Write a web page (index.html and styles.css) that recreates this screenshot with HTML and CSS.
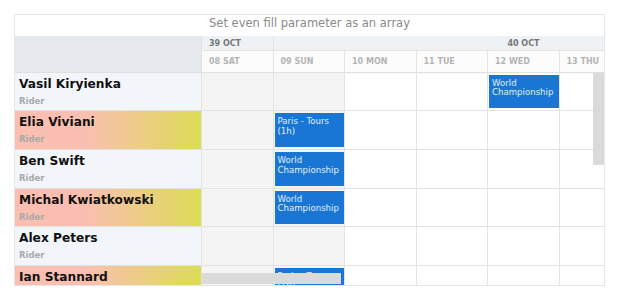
FILE: index.html
```html
<!DOCTYPE html>
<html>
<head>
  <meta charset="utf-8">
  <title>Scheduler - even fill</title>
  <link rel="stylesheet" href="styles.css">
</head>
<body>
<div class="scheduler">
  <div class="title">Set even fill parameter as an array</div>
  <div class="main">
    <div class="res-pane">
      <div class="res-header"></div>
      <div class="res odd"><div class="name">Vasil Kiryienka</div><div class="role">Rider</div></div>
      <div class="res even"><div class="name">Elia Viviani</div><div class="role">Rider</div></div>
      <div class="res odd"><div class="name">Ben Swift</div><div class="role">Rider</div></div>
      <div class="res even"><div class="name">Michal Kwiatkowski</div><div class="role">Rider</div></div>
      <div class="res odd"><div class="name">Alex Peters</div><div class="role">Rider</div></div>
      <div class="res even"><div class="name">Ian Stannard</div><div class="role">Rider</div></div>
    </div>

    <div class="time-pane">
      <div class="time-header">
        <div class="weeks">
          <div class="week w39">39 OCT</div>
          <div class="week w40">40 OCT</div>
        </div>
        <div class="days">
          <div class="day">08 SAT</div>
          <div class="day">09 SUN</div>
          <div class="day">10 MON</div>
          <div class="day">11 TUE</div>
          <div class="day">12 WED</div>
          <div class="day">13 THU</div>
          <div class="day">14 FRI</div>
          <div class="day">15 SAT</div>
        </div>
      </div>

      <div class="time-body">
        <div class="trow">
          <div class="cell we"></div><div class="cell we"></div><div class="cell"></div><div class="cell"></div>
          <div class="cell"><div class="event">World Championship</div></div>
          <div class="cell"></div><div class="cell"></div><div class="cell we"></div>
        </div>
        <div class="trow">
          <div class="cell we"></div>
          <div class="cell we"><div class="event">Paris - Tours (1h)</div></div>
          <div class="cell"></div><div class="cell"></div><div class="cell"></div><div class="cell"></div><div class="cell"></div><div class="cell we"></div>
        </div>
        <div class="trow">
          <div class="cell we"></div>
          <div class="cell we"><div class="event">World Championship</div></div>
          <div class="cell"></div><div class="cell"></div><div class="cell"></div><div class="cell"></div><div class="cell"></div><div class="cell we"></div>
        </div>
        <div class="trow">
          <div class="cell we"></div>
          <div class="cell we"><div class="event">World Championship</div></div>
          <div class="cell"></div><div class="cell"></div><div class="cell"></div><div class="cell"></div><div class="cell"></div><div class="cell we"></div>
        </div>
        <div class="trow">
          <div class="cell we"></div><div class="cell we"></div>
          <div class="cell"></div><div class="cell"></div><div class="cell"></div><div class="cell"></div><div class="cell"></div><div class="cell we"></div>
        </div>
        <div class="trow">
          <div class="cell we"></div>
          <div class="cell we"><div class="event">Paris - Tours (1h)</div></div>
          <div class="cell"></div><div class="cell"></div><div class="cell"></div><div class="cell"></div><div class="cell"></div><div class="cell we"></div>
        </div>
      </div>

      <!-- overlay scrollbars -->
      <div class="vscroll"></div>
      <div class="hscroll"></div>
    </div>
  </div>
</div>
</body>
</html>
```

FILE: styles.css
```css
html, body {
  margin: 0;
  padding: 0;
  background: #fff;
  font-family: "DejaVu Sans", Verdana, sans-serif;
}
body { padding: 14px 0 0 14px; }

.scheduler {
  width: 591px;
  height: 272px;
  box-sizing: border-box;
  border: 1px solid #e6e6e6;
  display: flex;
  flex-direction: column;
  overflow: hidden;
}

.title {
  height: 21px;
  line-height: 16px;
  text-align: center;
  font-size: 11.5px;
  color: #8a8a8a;
  flex: none;
}

.main {
  flex: 1;
  display: flex;
  overflow: hidden;
}

/* resources */
.res-pane {
  width: 187px;
  flex: none;
  border-right: 1px solid #e2e2e2;
  box-sizing: border-box;
}
.res-header {
  height: 36.7px;
  background: #e6eaee;
  border-bottom: 1px solid #e0e0e0;
  box-sizing: border-box;
}
.res {
  height: 38.67px;
  box-sizing: border-box;
  border-bottom: 1px solid #e2e2e2;
  padding: 3px 4px 0;
}
.res.odd { background: #f2f5f9; }
.res.even { background: linear-gradient(to right, #fbbfb1 38%, #dbdd55); }
.name {
  font-size: 12.2px;
  font-weight: bold;
  color: #111;
  line-height: 17px;
}
.role {
  font-size: 8.5px;
  font-weight: bold;
  color: #a9a9a9;
  margin-top: 3px;
}

/* timeline */
.time-pane {
  flex: 1;
  position: relative;
  overflow: hidden;
}
.time-header {
  height: 36.7px;
  box-sizing: border-box;
  border-bottom: 1px solid #e0e0e0;
}
.weeks {
  display: flex;
  height: 15px;
  background: #eef2f5;
  border-bottom: 1px solid #e4e4e4;
  box-sizing: border-box;
}
.week {
  flex: none;
  box-sizing: border-box;
  border-right: 1px solid #e2e2e2;
  font-size: 8px;
  font-weight: bold;
  color: #777;
  line-height: 16px;
  padding-left: 7px;
}
.w39 { width: 71.7px; }
.w40 { width: 500.5px; text-align: center; padding: 0; }

.days { display: flex; height: 20.7px; background: #fcfcfc; }
.day, .cell {
  width: 71.5px;
  flex: none;
  box-sizing: border-box;
  border-right: 1px solid #e4e4e4;
}
.day {
  font-size: 8px;
  font-weight: bold;
  color: #b4b4b4;
  line-height: 22px;
  padding-left: 7px;
}

.trow {
  display: flex;
  height: 38.67px;
  box-sizing: border-box;
  border-bottom: 1px solid #e2e2e2;
}
.cell { background: #fff; }
.cell.we { background: #f4f4f4; }

.event {
  margin: 2px 0 2px 1px;
  height: calc(100% - 4px);
  background: #1a76d4;
  color: #e3eefa;
  font-size: 8.6px;
  line-height: 9.5px;
  padding: 4px 3px 2px;
  box-sizing: border-box;
  overflow: hidden;
}

.vscroll {
  position: absolute;
  right: 0;
  top: 36.7px;
  width: 11px;
  height: 92px;
  background: #dadada;
}
.hscroll {
  position: absolute;
  left: 0;
  bottom: 1px;
  width: 139px;
  height: 11px;
  background: #dadada;
}
```
